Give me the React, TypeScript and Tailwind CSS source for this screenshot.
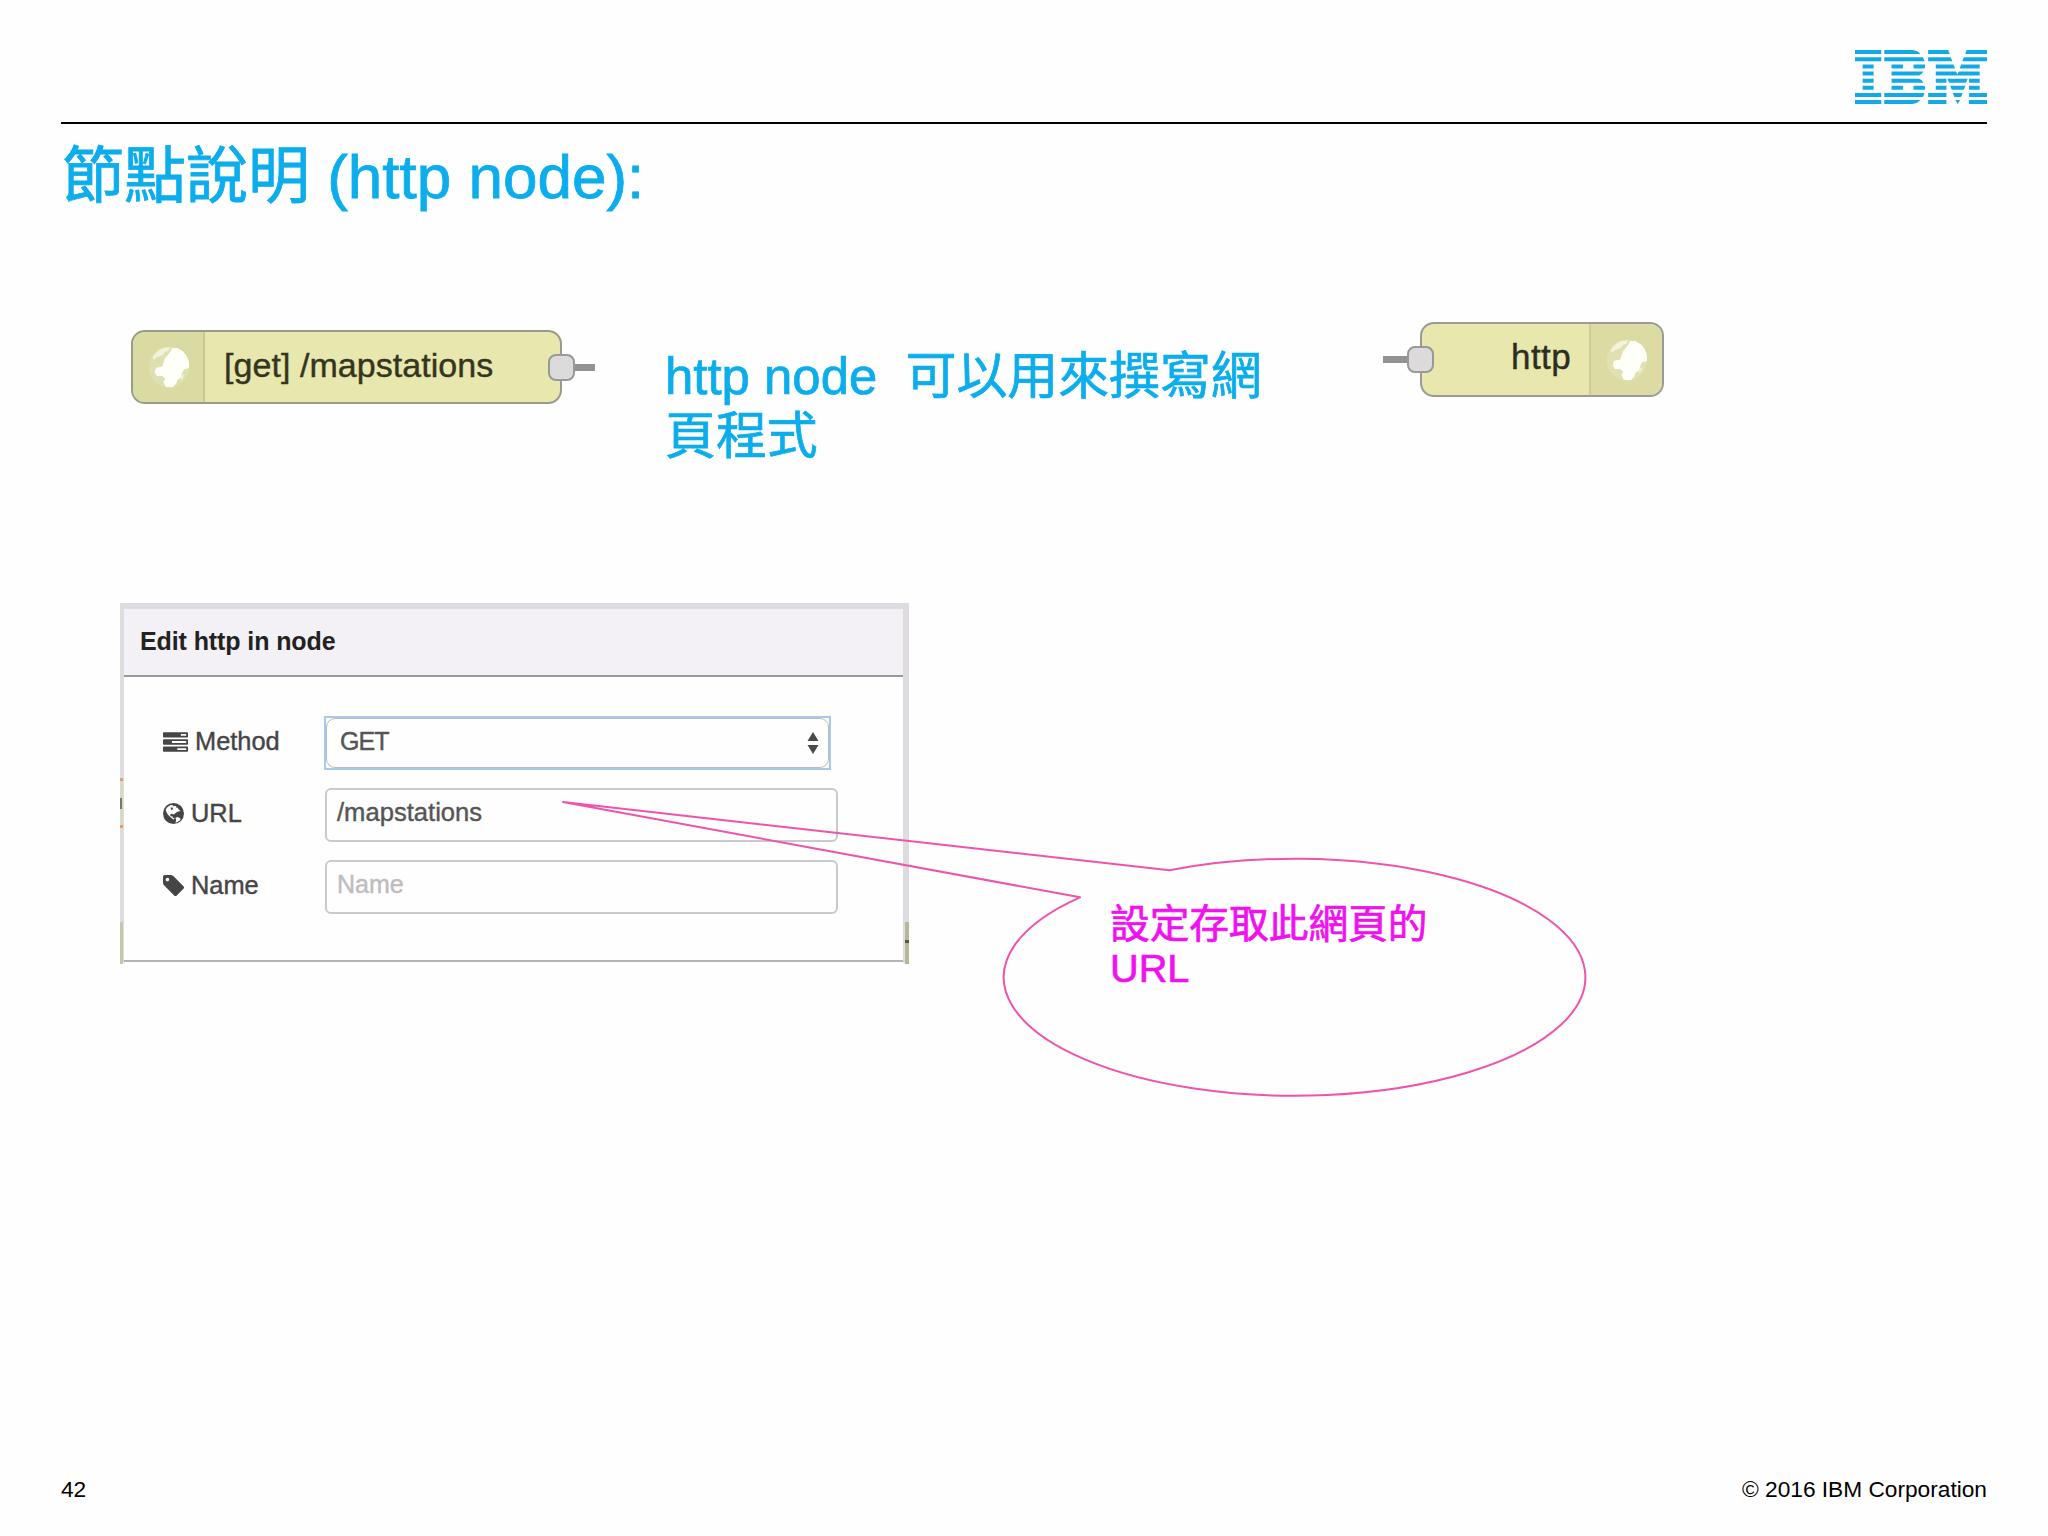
import type { ReactNode } from "react";

// one path for each of the eight stripes of the logo
const LOGO_STRIPES: string[] = [
  "M43 0H122V12H43ZM131 0H215Q232 2 240 12H131ZM263 0H323L328 12H263ZM379 0H440V12H374Z",
  "M43 22H122V34H43ZM131 22H247Q251 28 252 34H131ZM263 22H331L336 34H263ZM370 22H440V34H366Z",
  "M66 44H99V56H66ZM153 44H187V56H153ZM219 44H254Q254 50 252 56H219ZM286 44H339L344 56H286ZM362 44H418V56H358Z",
  "M66 65H99V77H66ZM153 65H249Q244 73 236 77H153ZM286 65H347L351 74L355 65H418V77H286Z",
  "M66 87H99V99H66ZM153 87H236Q246 92 249 99H153ZM286 87H318V99H286ZM321 87H382L377 99H326ZM386 87H418V99H386Z",
  "M66 108H99V120H66ZM153 108H187V120H153ZM219 108H252Q254 113 254 120H219ZM286 108H318V120H286ZM329 108H375L370 120H334ZM386 108H418V120H386Z",
  "M43 130H122V142H43ZM131 130H252Q251 136 247 142H131ZM263 130H318V142H263ZM337 130H367L362 142H342ZM386 130H440V142H386Z",
  "M43 151H122V163H43ZM131 151H240Q231 161 215 163H131ZM263 151H318V163H263ZM345 151H359L352 163ZM386 151H440V163H386Z",
];

function Logo() {
  return (
    <svg viewBox="43 0 397 163" className="h-[54px] w-[132px]" fill="#13a9e6" preserveAspectRatio="none">
      {LOGO_STRIPES.map((d) => (
        <path key={d} d={d} />
      ))}
    </svg>
  );
}

function TasksIcon() {
  return (
    <svg viewBox="0 128 1792 1408" className="h-5 w-[25px]" fill="currentColor">
      <path d="M1024 1408h640v-128h-640v128zm-384-512h1024v-128h-1024v128zm640-512h384v-128h-384v128zm512 832v256q0 26-19 45t-45 19h-1664q-26 0-45-19t-19-45v-256q0-26 19-45t45-19h1664q26 0 45 19t19 45zm0-512v256q0 26-19 45t-45 19h-1664q-26 0-45-19t-19-45v-256q0-26 19-45t45-19h1664q26 0 45 19t19 45zm0-512v256q0 26-19 45t-45 19h-1664q-26 0-45-19t-19-45v-256q0-26 19-45t45-19h1664q26 0 45 19t19 45z" />
    </svg>
  );
}

function GlobeIcon() {
  return (
    <svg viewBox="0 0 64 64" className="size-[21px]">
      <circle cx="32" cy="32" r="32" fill="currentColor" />
      <path
        d="M12 14L22 7L31 6L29 11L37 8L42 12L38 16L44 14L48 20L54 24L46 26L40 29L36 33L31 35L26 33L21 36L24 41L29 40L30 45L36 48L32 50L22 43L14 34L10 27L8 21Z"
        fill="#fff"
      />
      <path d="M38 45L45 43L54 48L51 53L44 58L38 60L40 52Z" fill="#fff" />
      <path d="M23 14L29 14L31 19L25 21Z" fill="currentColor" />
    </svg>
  );
}

function TagIcon() {
  return (
    <svg viewBox="128 128 1516 1516" className="size-[21px]" fill="currentColor">
      <path d="M576 448q0-53-37.5-90.5t-90.5-37.5-90.5 37.5-37.5 90.5 37.5 90.5 90.5 37.5 90.5-37.5 37.5-90.5zm1067 576q0 53-37 90l-491 492q-39 37-91 37-53 0-90-37l-715-716q-38-37-64.5-101t-26.5-117v-416q0-52 38-90t90-38h416q53 0 117 26.5t102 64.5l715 714q37 39 37 91z" />
    </svg>
  );
}

function WorldIcon() {
  return (
    <svg viewBox="0 0 126 126" className="size-[42px]" fill="#fffffa">
      <circle cx="63" cy="63" r="61" opacity="0.16" />
      <path d="M14 34Q26 12 48 5L66 4L62 14L50 18L46 26L36 30L26 34L18 42Z" opacity="0.6" />
      <path d="M62 24L50 38L46 52L42 62L24 65L20 78L26 90L42 90L52 98L46 108L54 123L74 124L84 114L88 102L100 94L102 82L108 70L123 66Q126 44 112 24Q102 12 88 6L72 6L68 16Z" />
      <path d="M100 90L109 84L105 98L98 104Z" opacity="0.5" />
    </svg>
  );
}

function Port() {
  return <div className="size-[27px] shrink-0 rounded-[8px] border-[2.5px] border-[#999] bg-[#dcdadb]" />;
}

function HttpInNode() {
  return (
    <div className="flex items-center">
      <div className="flex h-[74px] w-[431px] overflow-hidden rounded-[14px] border-[2.5px] border-[#9a9a88] bg-[#e7e7ae]">
        <div className="flex w-[72px] items-center justify-center border-r-2 border-[#c8c896] bg-[#d9dba2] pl-[2px]">
          <WorldIcon />
        </div>
        <span className="pt-[7px] pl-[19px] text-[34px] leading-[52px] tracking-[0.05px] text-[#35351f] [-webkit-text-stroke:0.4px]">
          [get] /mapstations
        </span>
      </div>
      <div className="-ml-[14px]">
        <Port />
      </div>
      <div className="h-[7px] w-[20px] bg-[#929292]" />
    </div>
  );
}

function HttpResponseNode() {
  return (
    <div className="flex items-center">
      <div className="h-[7px] w-[24px] bg-[#929292]" />
      <div className="z-10 -mr-[14px]">
        <Port />
      </div>
      <div className="flex h-[75px] w-[244px] justify-end overflow-hidden rounded-[14px] border-[2.5px] border-[#9b9b95] bg-[#e7e7ae]">
        <span className="pt-[7px] pr-[18px] text-[35px] leading-[52px] tracking-[0.4px] text-[#2d2d22] [-webkit-text-stroke:0.4px]">
          http
        </span>
        <div className="flex w-[73px] items-center justify-center border-l-2 border-[#cccc9c] bg-[#dcdba3]">
          <WorldIcon />
        </div>
      </div>
    </div>
  );
}

function FormRow({ icon, label, children }: { icon: ReactNode; label: string; children: ReactNode }) {
  return (
    <div className="flex items-center">
      <div className="flex w-[161px] items-center gap-[7px] pb-[3px] text-[#454446]">
        {icon}
        <span className="-mt-[2px] text-[25.4px] leading-8 [-webkit-text-stroke:0.4px]">{label}</span>
      </div>
      {children}
    </div>
  );
}

function EditDialog() {
  return (
    <section className="relative h-[360px] w-[789px] border-t-[6px] border-r-[6px] border-l-4 border-[#dedce0] text-[25.6px]">
      <h2 className="h-[68px] border-b-2 border-[#99989a] bg-[#f3f1f5] pt-[14px] pl-4 text-[25px] leading-9 font-bold tracking-[-0.1px] text-[#222]">
        Edit http in node
      </h2>
      <div className="flex h-[285px] flex-col border-b-2 border-[#b4b4b6] bg-[#fefefe] pt-[39px] pl-[39px] text-[#555]">
        <FormRow icon={<TasksIcon />} label="Method">
          <div className="h-[54px] w-[507px] border-2 border-[#a9c9e8]">
            <div className="flex h-[50px] items-center justify-between rounded-[9px] border border-[#bbb] pr-[9px] pb-[5px] pl-[13px]">
              <span className="text-[25px] leading-8 tracking-[-0.9px] [-webkit-text-stroke:0.4px]">GET</span>
              <svg viewBox="0 0 12 22" className="mt-[5px] h-[22px] w-3" fill="#4a4a4a">
                <path d="M6 0L11.5 9H0.5ZM6 22L11.5 13H0.5Z" />
              </svg>
            </div>
          </div>
        </FormRow>
        <div className="h-[18px]" />
        <FormRow icon={<GlobeIcon />} label="URL">
          <div className="ml-px h-[54px] w-[513px] rounded-[6px] border-2 border-[#cac9cb] pt-[6px] pl-[10px] leading-8 [-webkit-text-stroke:0.4px]">
            /mapstations
          </div>
        </FormRow>
        <div className="h-[18px]" />
        <FormRow icon={<TagIcon />} label="Name">
          <div className="ml-px h-[54px] w-[513px] rounded-[6px] border-2 border-[#cac9cb] pt-[6px] pl-[10px] text-[25px] leading-8 text-[#bdbcbe] [-webkit-text-stroke:0.4px]">
            Name
          </div>
        </FormRow>
      </div>
      {/* slivers of the canvas nodes that show behind the dialog */}
      <div className="absolute top-[169px] -left-1 h-[50px] w-[3px] border-y-[3px] border-[#e0a060] bg-[#d9dac6]">
        <div className="mt-[17px] h-[11px] w-0.5 bg-[#77786a]" />
      </div>
      <div className="absolute top-[313px] -left-1 h-[42px] w-[3px] bg-[#c6c8ac]" />
      <div className="absolute top-[313px] -right-[6px] h-[42px] w-1 bg-[#b7b994]">
        <div className="mt-[18px] h-[3px] w-1 bg-[#55563f]" />
      </div>
    </section>
  );
}

function Callout() {
  return (
    <div className="absolute top-[790px] left-[550px] h-[320px] w-[1050px]">
      <svg viewBox="550 790 1050 320" className="absolute inset-0 h-full w-full" fill="none">
        <path
          d="M563 802L1169.5 870.3A290.8 118.5 0 1 1 1080 897.3Z"
          stroke="#ee54ab"
          strokeWidth="2"
          strokeLinejoin="round"
        />
      </svg>
      <p className="absolute top-[112px] left-[560px] w-[330px] text-[39.7px] leading-[44px] text-[#f010f0] [-webkit-text-stroke:0.7px]">
        設定存取此網頁的
        <br />
        URL
      </p>
    </div>
  );
}

export default function App() {
  return (
    <main className="relative flex h-[1536px] w-[2048px] flex-col overflow-hidden bg-[#fefefe] pr-[61px] pl-[61px] font-['Liberation_Sans','Noto_Sans_CJK_TC',sans-serif]">
      <header className="flex h-[124px] justify-end border-b-2 border-black pt-[50px]">
        <Logo />
      </header>

      <h1 className="mt-[15px] pl-px text-[62px] leading-[76px] text-[#0badec] [-webkit-text-stroke:0.8px]">
        節點說明 (http node):
      </h1>

      <div className="mt-[107px] flex h-[281px] items-start pl-[70px]">
        <div className="mt-[8px]">
          <HttpInNode />
        </div>
        <p className="mt-[25px] ml-[70px] w-[620px] text-[50.9px] leading-[60px] whitespace-pre text-[#0badec] [-webkit-text-stroke:0.7px]">
          {"http node  可以用來撰寫網\n頁程式"}
        </p>
        <div className="ml-[98px]">
          <HttpResponseNode />
        </div>
      </div>

      <div className="pl-[59px]">
        <EditDialog />
      </div>

      <Callout />

      <footer className="mt-auto mb-[32px] flex justify-between text-[22.7px] leading-[30px] text-black">
        <span>42</span>
        <span>© 2016 IBM Corporation</span>
      </footer>
    </main>
  );
}
